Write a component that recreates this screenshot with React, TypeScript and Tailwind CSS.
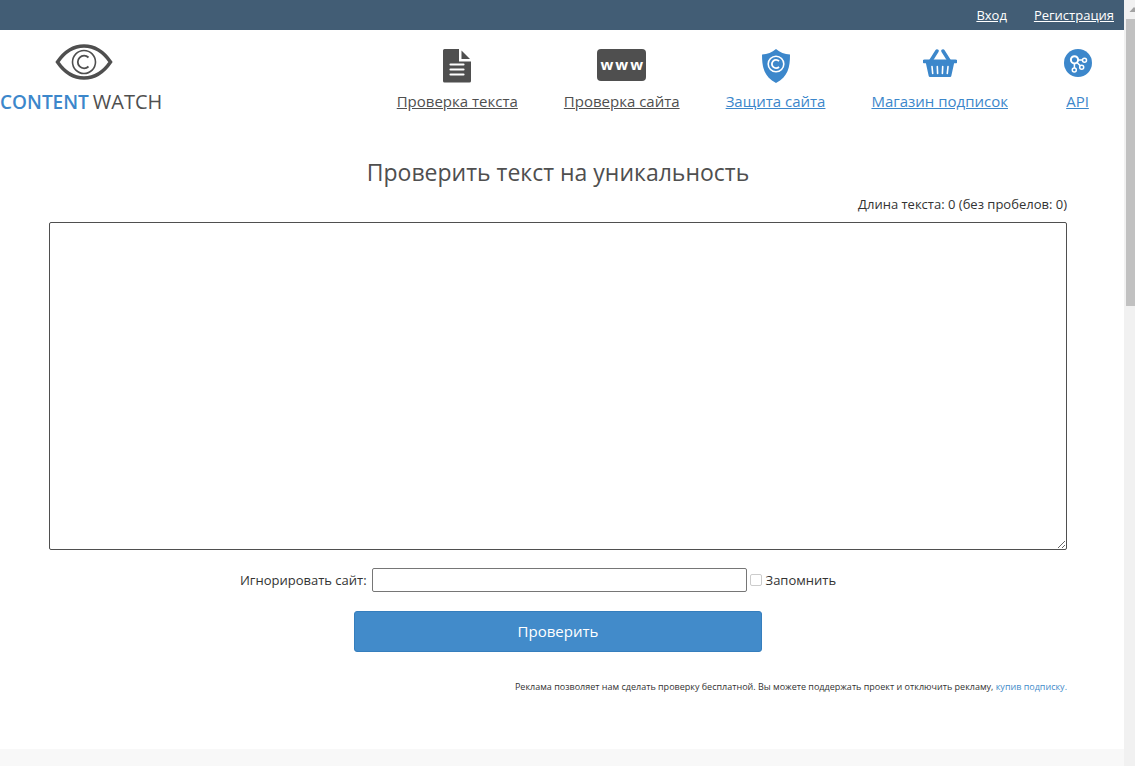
import { useState } from "react";
import type { ReactNode } from "react";

interface NavItem {
  label: string;
  color: string;
  icon: ReactNode;
}

function EyeLogo() {
  return (
    <svg width="58" height="38" viewBox="0 0 58 38" fill="none" stroke="#4f4f4f">
      <path d="M2.500 19C10 8 19 3 29 3s19 5 26.500 16C48 30 39 35 29 35S10 30 2.500 19Z" strokeWidth="3.500" />
      <circle cx="29" cy="19" r="11.500" strokeWidth="1.600" />
      <path d="M33.500 14.500a6.300 6.300 0 1 0 0 9" strokeWidth="1.800" />
    </svg>
  );
}

function DocumentIcon() {
  return (
    <svg width="28" height="34" viewBox="0 0 28 34">
      <path d="M1.500 0H16v12.500h12V32a1.500 1.500 0 0 1-1.500 1.500h-25A1.500 1.500 0 0 1 0 32V1.500A1.500 1.500 0 0 1 1.500 0Z" fill="#4f4f4f" />
      <path d="M18.500 1.500 27 10h-8.500Z" fill="#4f4f4f" />
      <path d="M7.500 15.500h13M7.500 20.500h13M7.500 25.500h13" stroke="#fff" strokeWidth="2.200" strokeLinecap="round" />
    </svg>
  );
}

function WwwIcon() {
  return (
    <span className="flex h-8 w-[49px] items-center justify-center gap-[2px] rounded-[4px] bg-[#4f4f4f] pb-[2px] text-[15px] leading-none font-bold text-white">
      <span>w</span>
      <span>w</span>
      <span>w</span>
    </span>
  );
}

function ShieldIcon() {
  return (
    <svg width="28" height="34" viewBox="0 0 28 34" fill="none" stroke="#fff">
      <path d="M14 0c4 3.500 8.500 5 14 5.500 0 13-2 22-14 28.500C2 27.500 0 18.500 0 5.500 5.500 5 10 3.500 14 0Z" fill="#3c87cb" stroke="none" />
      <circle cx="14" cy="15" r="7.800" strokeWidth="1.600" />
      <path d="M17 12.200a4.100 4.100 0 1 0 0 5.600" strokeWidth="1.800" />
    </svg>
  );
}

function BasketIcon() {
  return (
    <svg width="34" height="28" viewBox="0 0 34 28" fill="none">
      <path d="M1.500 10.500h31a1.200 1.200 0 0 1 0 3.800h-1.400L28.300 27a1.300 1.300 0 0 1-1.200 1H6.900a1.300 1.300 0 0 1-1.200-1L2.900 14.300H1.500a1.200 1.200 0 0 1 0-3.800Z" fill="#3c87cb" />
      <path d="M8 11.500 14 2M26 11.500 20 2" stroke="#3c87cb" strokeWidth="3.500" strokeLinecap="round" />
      <path d="m9 17.500.7 7M14.300 17.500l.3 7M19.700 17.500l-.3 7M25 17.500l-.7 7" stroke="#fff" strokeWidth="1.600" strokeLinecap="round" />
    </svg>
  );
}

function ApiIcon() {
  return (
    <svg width="28" height="28" viewBox="0 0 28 28" fill="none" stroke="#fff">
      <circle cx="14" cy="14" r="14" fill="#3c87cb" stroke="none" />
      <circle cx="10.500" cy="10.800" r="3.600" strokeWidth="2" />
      <circle cx="20.500" cy="11.200" r="2" strokeWidth="1.500" />
      <circle cx="17.700" cy="18.200" r="2" strokeWidth="1.500" />
      <circle cx="10.300" cy="21" r="2" strokeWidth="1.500" />
      <path d="M14 11h4.500M13 13.400l3.300 3.400M10.400 14.500v4.400" strokeWidth="1.500" />
    </svg>
  );
}

const NAV_ITEMS: NavItem[] = [
  { label: "Проверка текста", color: "text-[#4f4f4f]", icon: <DocumentIcon /> },
  { label: "Проверка сайта", color: "text-[#4f4f4f]", icon: <WwwIcon /> },
  { label: "Защита сайта", color: "text-[#3c87cb]", icon: <ShieldIcon /> },
  { label: "Магазин подписок", color: "text-[#3c87cb]", icon: <BasketIcon /> },
  { label: "API", color: "text-[#3c87cb]", icon: <ApiIcon /> },
];

function Header() {
  return (
    <header>
      <div className="flex h-[30px] items-center justify-end gap-[27px] bg-[#425d75] pr-[10px] text-[13px] text-white">
        <a href="#login" className="underline">Вход</a>
        <a href="#register" className="underline">Регистрация</a>
      </div>
      <div className="flex justify-between pr-[23px]">
        <a href="#home" className="flex w-[167px] flex-col pt-[13px]">
          <span className="self-center">
            <EyeLogo />
          </span>
          <span className="mt-2 flex items-baseline gap-1 leading-[26px] whitespace-nowrap">
            <span className="text-[19px] font-semibold text-[#3c87cb]">CONTENT</span>
            <span className="text-[20px] text-[#4f4f4f]">WATCH</span>
          </span>
        </a>
        <nav className="flex gap-[46px] pt-[19px]">
          {NAV_ITEMS.map((item) => (
            <a key={item.label} href="#nav" className={`flex min-w-[47px] flex-col items-center ${item.color}`}>
              <span className="flex h-[42px] items-start">{item.icon}</span>
              <span className="text-[15px] leading-5 whitespace-nowrap underline">{item.label}</span>
            </a>
          ))}
        </nav>
      </div>
    </header>
  );
}

function CheckForm() {
  const [text, setText] = useState("");
  const [site, setSite] = useState("");
  const [remember, setRemember] = useState(false);

  return (
    <form className="flex flex-col" onSubmit={(e) => e.preventDefault()}>
      <p className="text-right">
        Длина текста: {text.length} (без пробелов: {text.replace(/\s/g, "").length})
      </p>
      <textarea
        aria-label="Текст для проверки"
        value={text}
        onChange={(e) => setText(e.target.value)}
        className="mt-2 block h-[328px] w-full resize rounded-[2px] border border-[#4f4f4f] p-1"
      />
      <div className="mt-[18px] flex items-center justify-center pr-10">
        <label htmlFor="ignore">Игнорировать сайт:</label>
        <input
          id="ignore"
          type="text"
          value={site}
          onChange={(e) => setSite(e.target.value)}
          className="ml-[5px] h-6 w-[375px] rounded-[2px] border border-[#767676] px-1"
        />
        <input
          id="remember"
          type="checkbox"
          checked={remember}
          onChange={(e) => setRemember(e.target.checked)}
          className="mr-1 ml-[3px] h-3 w-3 appearance-none rounded-[2px] border border-[#cccccc] bg-white checked:bg-[#428bca]"
        />
        <label htmlFor="remember">Запомнить</label>
      </div>
      <button
        type="submit"
        className="mt-[19px] h-[41px] w-2/5 self-center rounded-[3px] border border-[#357ebd] bg-[#428bca] pb-[2px] text-[15px] text-white"
      >
        Проверить
      </button>
    </form>
  );
}

function ScrollTrack() {
  return (
    <div className="w-[11px] shrink-0 bg-[#f1f1f1]">
      <svg width="11" height="19" viewBox="0 0 11 19" className="block">
        <path d="M5.500 12 10 7l4.500 5Z" fill="#a3a3a3" />
      </svg>
      <div className="ml-[2px] h-[287px] bg-[#c1c1c1]" />
    </div>
  );
}

export default function App() {
  return (
    <div className="flex min-h-screen bg-white font-['Open_Sans','Noto_Sans',sans-serif] text-[13px] leading-5 text-[#333333]">
      <div className="flex min-w-0 flex-1 flex-col">
        <Header />
        <main className="pt-[41px] pr-[57px] pb-[52px] pl-[49px]">
          <h1 className="mb-[6px] text-center text-[23px] leading-8 text-[#4f4f4f]">
            Проверить текст на уникальность
          </h1>
          <CheckForm />
          <p className="mt-[25px] text-right text-[9px]">
            Реклама позволяет нам сделать проверку бесплатной. Вы можете поддержать проект и отключить рекламу,{" "}
            <a href="#subscribe" className="text-[#428bca]">купив подписку.</a>
          </p>
        </main>
        <footer className="min-h-[17px] flex-1 bg-[#f8f8f8]" />
      </div>
      <ScrollTrack />
    </div>
  );
}
